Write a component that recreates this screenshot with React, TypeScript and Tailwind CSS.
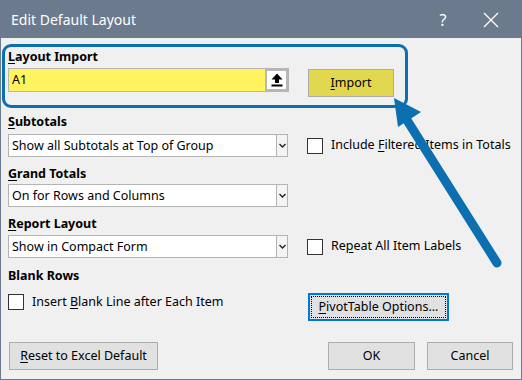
import type { ReactNode } from "react";

const font = { fontFamily: '"Noto Sans", "Open Sans", Arial, sans-serif' };

function Acc({ children }: { children: ReactNode }) {
  return <span className="underline underline-offset-2">{children}</span>;
}

function Select({ value }: { value: string }) {
  return (
    <div className="flex h-[23px] w-[280px] shrink-0 border border-[#b4b4b4] bg-white">
      <div className="flex-1 pl-[3px] text-[12.5px] leading-[21px] text-black">{value}</div>
      <div className="flex w-[11px] items-center justify-center border-l border-[#b4b4b4] bg-[#f4f4f4]">
        <svg width="7" height="5" viewBox="0 0 7 5">
          <path d="M0.5 1 L3.5 4 L6.5 1" fill="none" stroke="#222" strokeWidth="1.4" />
        </svg>
      </div>
    </div>
  );
}

function Check({ children }: { children: ReactNode }) {
  return (
    <div className="flex items-center gap-[8px] text-[12.5px] text-black">
      <div className="h-[16px] w-[16px] shrink-0 border border-[#333] bg-white" />
      <span className="whitespace-nowrap">{children}</span>
    </div>
  );
}

function Btn({
  children,
  className = "",
}: {
  children: ReactNode;
  className?: string;
}) {
  return (
    <div
      className={`flex h-[28px] shrink-0 items-center justify-center border border-[#adadad] bg-[#e1e1e1] text-[12.5px] text-black ${className}`}
    >
      {children}
    </div>
  );
}

export default function App() {
  return (
    <div
      style={font}
      className="relative flex h-[380px] w-[522px] flex-col overflow-hidden border border-[#6b7a8d] bg-[#f0f0f0]"
    >
      {/* title bar */}
      <div className="flex h-[37px] shrink-0 items-center bg-[#6b7a8d] pl-[10px] text-white">
        <span className="flex-1 text-[14px]">Edit Default Layout</span>
        <span className="w-[56px] text-center text-[16px]">?</span>
        <svg width="16" height="16" viewBox="0 0 16 16" className="mr-[22px] ml-[12px]">
          <path d="M1 1 L15 15 M15 1 L1 15" stroke="white" strokeWidth="1.3" />
        </svg>
      </div>

      <div className="flex flex-col pl-[7px]">
        {/* layout import */}
        <div className="mt-[11px] text-[12.5px] leading-[16px] font-bold text-black">
          <Acc>L</Acc>ayout Import
        </div>
        <div className="mt-[3px] flex items-start">
          <div className="flex h-[24px] w-[281px] shrink-0 border border-[#b4b4b4]">
            <div className="flex-1 bg-[#fff35f] pl-[3px] text-[12.5px] leading-[22px] text-black">A1</div>
            <div className="flex w-[23px] items-center justify-center border-2 border-[#b8b8b8] bg-white">
              <svg width="12" height="14" viewBox="0 0 12 14">
                <path d="M6 0.5 L11.5 6.5 L8 6.5 L8 10 L4 10 L4 6.5 L0.5 6.5 Z" fill="#000" />
                <rect x="0.5" y="11.5" width="11" height="2" fill="#000" />
              </svg>
            </div>
          </div>
          <div className="mt-[1px] ml-[19px] flex h-[28px] w-[86px] items-center justify-center border border-[#adadad] bg-[#e2d850] text-[12.5px] text-black">
            <Acc>I</Acc>mport
          </div>
        </div>

        {/* subtotals */}
        <div className="mt-[17px] text-[12.5px] leading-[16px] font-bold text-black">
          <Acc>S</Acc>ubtotals
        </div>
        <div className="mt-[4px] flex items-center">
          <Select value="Show all Subtotals at Top of Group" />
          <div className="ml-[19px]">
            <Check>
              Include <Acc>F</Acc>iltered Items in Totals
            </Check>
          </div>
        </div>

        {/* grand totals */}
        <div className="mt-[9px] text-[12.5px] leading-[16px] font-bold text-black">
          <Acc>G</Acc>rand Totals
        </div>
        <div className="mt-[2px] flex">
          <Select value="On for Rows and Columns" />
        </div>

        {/* report layout */}
        <div className="mt-[9px] text-[12.5px] leading-[16px] font-bold text-black">
          <Acc>R</Acc>eport Layout
        </div>
        <div className="mt-[3px] flex items-center">
          <Select value="Show in Compact Form" />
          <div className="ml-[19px]">
            <Check>
              Re<Acc>p</Acc>eat All Item Labels
            </Check>
          </div>
        </div>

        {/* blank rows */}
        <div className="mt-[10px] text-[12.5px] leading-[16px] font-bold text-black">Blank Rows</div>
        <div className="mt-[9px] flex items-start">
          <div className="w-[300px] shrink-0">
            <Check>
              Insert <Acc>B</Acc>lank Line after Each Item
            </Check>
          </div>
          <div className="flex h-[28px] w-[141px] shrink-0 items-center justify-center border-2 border-[#0078d7] bg-[#e1e1e1] p-[1px] text-[12.5px] text-black">
            <div className="flex h-full w-full items-center justify-center border border-dotted border-black">
              <Acc>P</Acc>ivotTable Options...
            </div>
          </div>
        </div>

        {/* bottom buttons */}
        <div className="mt-[21px] flex items-center pl-[1px]">
          <Btn className="w-[149px]">
            <Acc>R</Acc>eset to Excel Default
          </Btn>
          <div className="flex-1" />
          <Btn className="w-[87px]">OK</Btn>
          <Btn className="mr-[8px] ml-[12px] w-[86px]">Cancel</Btn>
        </div>
      </div>

      {/* annotation: highlight box */}
      <div className="absolute top-[43px] left-[1px] h-[64px] w-[406px] rounded-[9px] border-[3px] border-[#0b6fb0]" />

      {/* annotation: arrow */}
      <svg className="absolute top-0 left-0" width="522" height="380" viewBox="0 0 522 380">
        <line x1="496" y1="262" x2="404" y2="116" stroke="#0b6fb0" strokeWidth="9" strokeLinecap="round" />
        <path d="M393 97 L420 111 L397 126 Z" fill="#0b6fb0" />
      </svg>
    </div>
  );
}
